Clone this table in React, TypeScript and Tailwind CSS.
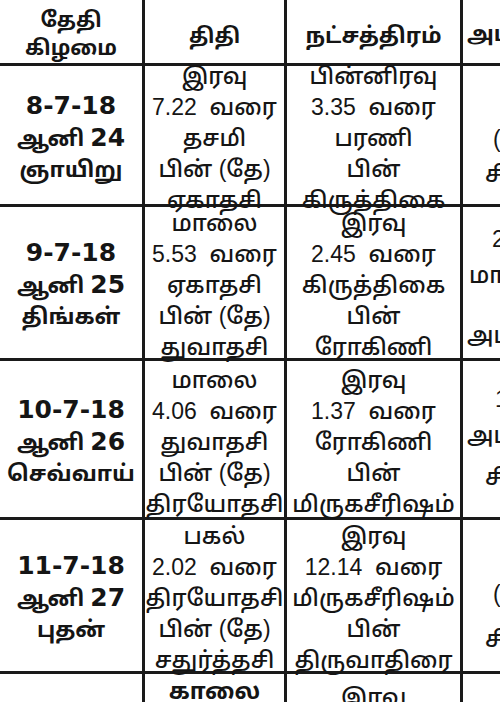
import React from "react";

type Seg = { t: string; num?: boolean };
type YLine = { t: string; ml: string; mt: string };
type Row = {
  h: string;
  day: Seg[][];
  thithi: string[];
  star: string[];
  yogam: YLine[];
};

const rows: Row[] = [
  {
    h: "h-[141px]",
    day: [[{ t: "8-7-18", num: true }], [{ t: "ஆனி " }, { t: "24", num: true }], [{ t: "ஞாயிறு" }]],
    thithi: ["இரவு", "7.22  வரை", "தசமி", "பின் (தே)", "ஏகாதசி"],
    star: ["பின்னிரவு", "3.35  வரை", "பரணி", "பின்", "கிருத்திகை"],
    yogam: [
      { t: "(சித்த)", ml: "ml-[30px]", mt: "mt-[58px]" },
      { t: "சித்தயோகம்", ml: "ml-[22px]", mt: "mt-[4px]" },
    ],
  },
  {
    h: "h-[154px]",
    day: [[{ t: "9-7-18", num: true }], [{ t: "ஆனி " }, { t: "25", num: true }], [{ t: "திங்கள்" }]],
    thithi: ["மாலை", "5.53  வரை", "ஏகாதசி", "பின் (தே)", "துவாதசி"],
    star: ["இரவு", "2.45  வரை", "கிருத்திகை", "பின்", "ரோகிணி"],
    yogam: [
      { t: "2.10", ml: "ml-[29px]", mt: "mt-[17px]" },
      { t: "மாலை வரை", ml: "ml-[6px]", mt: "mt-[5px]" },
      { t: "அமிர்தயோகம்", ml: "ml-[4px]", mt: "mt-[29px]" },
    ],
  },
  {
    h: "h-[159px]",
    day: [[{ t: "10-7-18", num: true }], [{ t: "ஆனி " }, { t: "26", num: true }], [{ t: "செவ்வாய்" }]],
    thithi: ["மாலை", "4.06  வரை", "துவாதசி", "பின் (தே)", "திரயோதசி"],
    star: ["இரவு", "1.37  வரை", "ரோகிணி", "பின்", "மிருகசீரிஷம்"],
    yogam: [
      { t: "1.37", ml: "ml-[32px]", mt: "mt-[23px]" },
      { t: "அமிர்தயோகம்", ml: "ml-[4px]", mt: "mt-[5px]" },
      { t: "சித்தயோகம்", ml: "ml-[22px]", mt: "mt-[11px]" },
    ],
  },
  {
    h: "h-[154px]",
    day: [[{ t: "11-7-18", num: true }], [{ t: "ஆனி " }, { t: "27", num: true }], [{ t: "புதன்" }]],
    thithi: ["பகல்", "2.02  வரை", "திரயோதசி", "பின் (தே)", "சதுர்த்தசி"],
    star: ["இரவு", "12.14  வரை", "மிருகசீரிஷம்", "பின்", "திருவாதிரை"],
    yogam: [
      { t: "(சித்த)", ml: "ml-[30px]", mt: "mt-[59px]" },
      { t: "சித்தயோகம்", ml: "ml-[22px]", mt: "mt-[14px]" },
    ],
  },
];

const font = "font-['Liberation_Sans','Noto_Sans_Tamil','Lohit_Tamil',sans-serif]";
const numFont = "font-['DejaVu_Sans','Liberation_Sans',sans-serif]";
const line = "border-[#1a1a1a]";

export default function App() {
  return (
    <div className={`w-[500px] h-[702px] overflow-hidden bg-white text-[#151515] ${font}`}>
      <div className="w-[620px]">
        {/* Header */}
        <div className={`flex h-[66px] border-b-[3px] ${line} font-bold`}>
          <div className={`w-[145px] shrink-0 border-r-[3px] ${line} flex flex-col items-center justify-center pt-[5px] text-[21px] leading-[28px]`}>
            <span>தேதி</span>
            <span>கிழமை</span>
          </div>
          <div className={`w-[142px] shrink-0 border-r-[3px] ${line} flex items-center justify-center pt-[8px] text-[21px]`}>
            திதி
          </div>
          <div className={`w-[176px] shrink-0 border-r-[3px] ${line} flex items-center justify-center pt-[8px] text-[22px]`}>
            நட்சத்திரம்
          </div>
          <div className="w-[150px] shrink-0 flex items-center pl-[4px] pt-[4px] text-[22px]">
            அமிர்தாதி
          </div>
        </div>

        {rows.map((r) => (
          <div key={r.day[0][0].t} className={`flex ${r.h} border-b-[3px] ${line}`}>
            <div className={`w-[145px] shrink-0 border-r-[3px] ${line} flex flex-col items-center justify-center pt-[4px] text-[22px] leading-[31px] font-bold`}>
              {r.day.map((segs, i) => (
                <span key={i} className="whitespace-pre">
                  {segs.map((s, j) =>
                    s.num ? (
                      <span key={j} className={`${numFont} text-[25px]`}>{s.t}</span>
                    ) : (
                      <span key={j}>{s.t}</span>
                    )
                  )}
                </span>
              ))}
            </div>
            <div className={`w-[142px] shrink-0 border-r-[3px] ${line} flex flex-col items-center justify-center pt-[6px] text-[23px] leading-[31px] font-medium`}>
              {r.thithi.map((l) => (
                <span key={l} className="whitespace-pre">{l}</span>
              ))}
            </div>
            <div className={`w-[176px] shrink-0 border-r-[3px] ${line} flex flex-col items-center justify-center pt-[6px] text-[23px] leading-[31px] font-medium`}>
              {r.star.map((l) => (
                <span key={l} className="whitespace-pre">{l}</span>
              ))}
            </div>
            <div className="w-[150px] shrink-0 flex flex-col text-[23px] leading-[31px] font-medium">
              {r.yogam.map((l, i) => (
                <span key={i} className={`${l.ml} ${l.mt} whitespace-pre`}>{l.t}</span>
              ))}
            </div>
          </div>
        ))}

        {/* Next row, cut off */}
        <div className="flex h-[40px]">
          <div className={`w-[145px] shrink-0 border-r-[3px] ${line}`} />
          <div className={`w-[142px] shrink-0 border-r-[3px] ${line} flex flex-col items-center pt-[2px] text-[23px] leading-[31px] font-bold`}>
            காலை
          </div>
          <div className={`w-[176px] shrink-0 border-r-[3px] ${line} flex flex-col items-center pt-[8px] text-[23px] leading-[31px] font-medium`}>
            இரவு
          </div>
          <div className="w-[150px] shrink-0" />
        </div>
      </div>
    </div>
  );
}
